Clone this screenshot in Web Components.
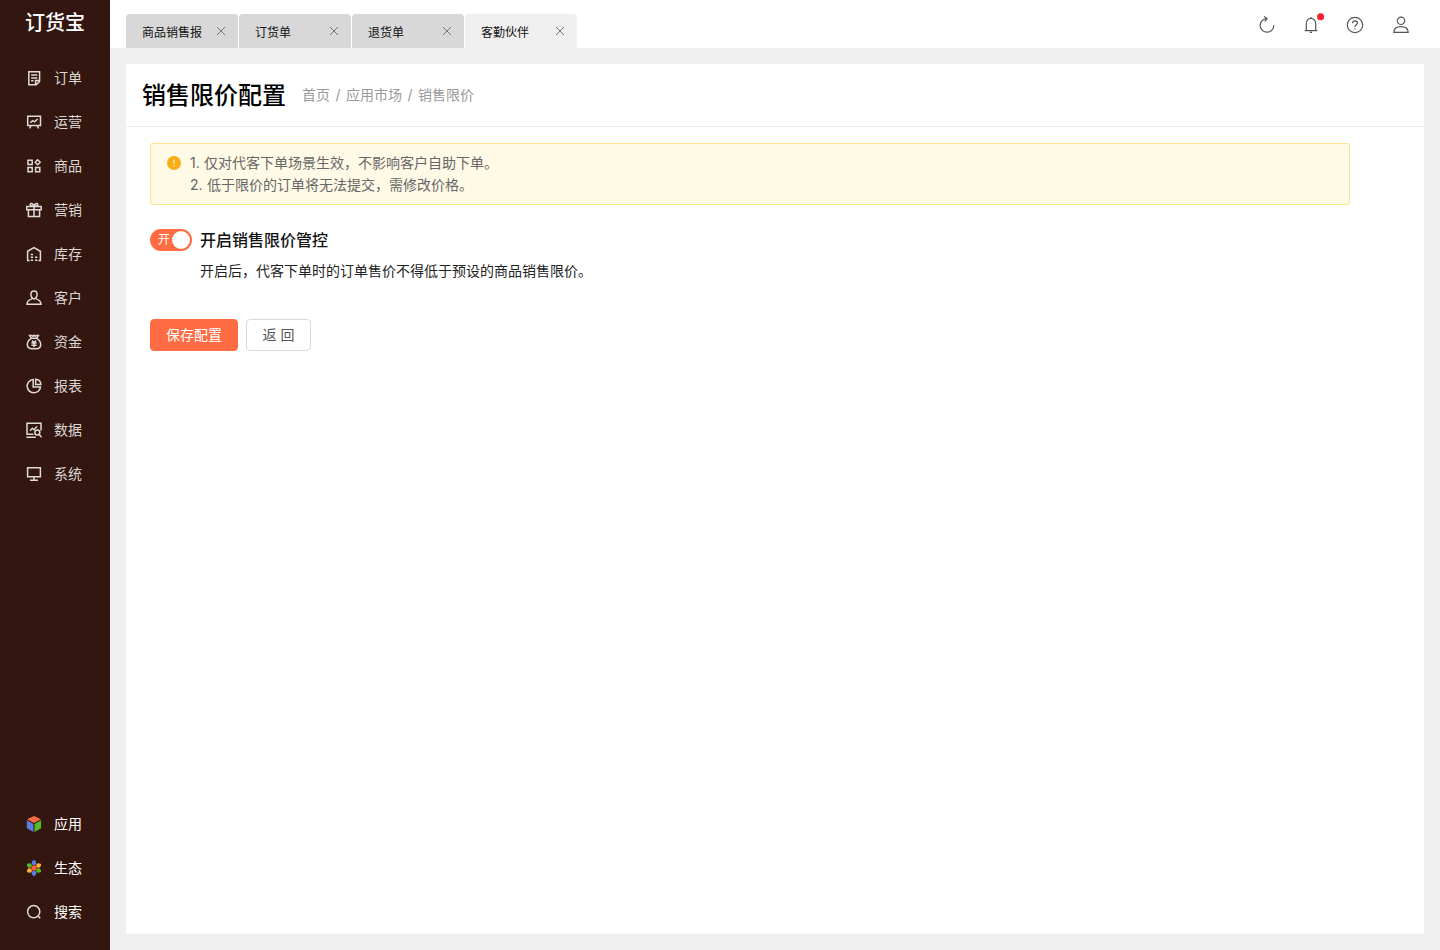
<!DOCTYPE html>
<html lang="zh-CN">
<head>
<meta charset="utf-8">
<title>销售限价配置</title>
<style>
    body {
        margin: 0;
        font-family: Inter, "Noto Sans CJK SC", sans-serif;
        font-size: 14px;
        line-height: 22px;
        color: #222;
    }
</style>
</head>
<body>
<app-shell>
    <side-nav slot="nav">
        <nav-item icon="order">订单</nav-item>
        <nav-item icon="board">运营</nav-item>
        <nav-item icon="goods">商品</nav-item>
        <nav-item icon="gift">营销</nav-item>
        <nav-item icon="store">库存</nav-item>
        <nav-item icon="user">客户</nav-item>
        <nav-item icon="money">资金</nav-item>
        <nav-item icon="pie">报表</nav-item>
        <nav-item icon="data">数据</nav-item>
        <nav-item icon="screen">系统</nav-item>
        <nav-item slot="bottom" icon="cube">应用</nav-item>
        <nav-item slot="bottom" icon="flower">生态</nav-item>
        <nav-item slot="bottom" icon="search">搜索</nav-item>
    </side-nav>
    <top-bar slot="top">
        <page-tab>商品销售报</page-tab>
        <page-tab>订货单</page-tab>
        <page-tab>退货单</page-tab>
        <page-tab active>客勤伙伴</page-tab>
    </top-bar>
    <page-card>
        <span slot="title">销售限价配置</span>
        <bread-crumb slot="crumb"><span>首页</span><i>/</i><span>应用市场</span><i>/</i><span>销售限价</span></bread-crumb>
        <alert-box>
            <alert-line><span slot="no">1.</span>仅对代客下单场景生效，不影响客户自助下单。</alert-line>
            <alert-line wide><span slot="no">2.</span>低于限价的订单将无法提交，需修改价格。</alert-line>
        </alert-box>
        <switch-field>
            <span slot="label">开启销售限价管控</span>
            开启后，代客下单时的订单售价不得低于预设的商品销售限价。
        </switch-field>
        <button-row>
            <ui-button primary>保存配置</ui-button>
            <ui-button>返 回</ui-button>
        </button-row>
    </page-card>
</app-shell>

<script>
// 16x16 line icons, the stroke colour comes from the parent
const icons = {
    order: '<path d="M9.500 14.800H2.800V1.700h10.800v8.800M13.600 10.500v.9l-3.400 3.400h-.6v-4.300z"/><path d="M5.100 5.100h6.200M5.100 7.900h6.200M5.100 10.700h2.500"/>',
    board: '<path d="M1.700 2.200h12.800v9.300H1.700zM4.900 11.800l-1.300 2.700M11.300 11.800l1.300 2.700"/><path d="M4.300 8.700l2.500-2 1.800 1.100 3-2.800"/>',
    goods: '<path d="M2 2.200h4.200v4.200H2zM2 9.500h4.200v4.200H2zM9.600 9.500h4.200v4.200H9.600zM11.700 1.700l2.500 2.500-2.500 2.500-2.500-2.500z"/>',
    gift: '<path d="M.8 4.600h14.400v3.200H.8zM2.400 7.800v6.700h11.200V7.800M8 4.600v9.900M8 4.300C6.800 4.300 4.200 4 4.200 2.500S7 .6 8 4.300C9 .6 11.800 1 11.800 2.500S9.200 4.300 8 4.300"/>',
    store: '<path d="M3.600 14.500H1.600V5.300L8 1.500l6.400 3.800v9.200h-2"/><path d="M4.700 8.500h2.400M4.700 11.300h2.400M9 11.300h2.400M4.700 14.200h2.400M9 14.200h2.400"/>',
    user: '<path d="M8 1.100c2 0 3.100 1.500 3.100 3.500S9.600 8.900 8 8.900 4.900 6.600 4.900 4.600 6 1.100 8 1.100zM5.900 8.900c-2.800.8-4.700 2.400-4.900 5.300h14c-.2-2.900-2.100-4.500-4.900-5.300"/>',
    money: '<path d="M5.200 4.200L3.600 1.400h2.200l1 .9L8 1.300l1.200 1 1-.9h2.200l-1.600 2.800M5.200 4.300h5.600c2.600 1.700 3.900 4 3.900 6.200 0 2.700-1.900 4.300-4.700 4.300H6c-2.800 0-4.700-1.600-4.700-4.300 0-2.200 1.300-4.500 3.900-6.200z"/><path d="M6 6.500l2 2.300 2-2.300M5.400 9h5.200M5.400 11.200h5.200M8 8.800v4.500"/>',
    pie: '<path d="M7.200 1.500a6.700 6.700 0 1 0 7.300 7.400H7.200z"/><path d="M9.700 1.200v5.200h5.200c-.2-2.900-2.300-5-5.200-5.200z"/>',
    data: '<path d="M1 12.500V1.200h14v7.300M.4 12.300h7M.4 15.300h9.400"/><path d="M4 8.700l2.400-2.500 1.500 1.500L11 4.400"/><circle cx="11.300" cy="10.600" r="2.500"/><path d="M13.100 12.500l2.500 2.700"/>',
    screen: '<path d="M1.600 1.700h12.800v9.100H1.600zM8 10.800v3.300M4 14.300h8"/>',
    search: '<circle cx="7.700" cy="7.700" r="6.100"/><path d="M12 12l2.200 2.300"/>',
    cube: '<g stroke="none"><path fill="#ff6b42" d="M8 0l6.900 3.300L8 7 1.100 3.300z"/><path fill="#5b7cdf" d="M.9 4.300l6.600 3.600V16L.9 12.300z"/><path fill="#51bd20" d="M15.100 4.300L8.500 7.900V16l6.600-3.700z"/></g>',
    flower: '<g stroke="none"><g fill="#5b7cdf"><path id="p" d="M8 -.2c1.700 1.100 2.400 2.100 2.300 3.500C10.100 4.500 9.200 5.100 8 5.200 6.800 5.100 5.900 4.500 5.700 3.300 5.600 1.900 6.300.9 8-.2z"/><use href="#p" transform="rotate(180 8 8)"/></g><g fill="#f9b13c"><use href="#p" transform="rotate(60 8 8)"/><use href="#p" transform="rotate(240 8 8)"/></g><g fill="#51bd20"><use href="#p" transform="rotate(120 8 8)"/><use href="#p" transform="rotate(300 8 8)"/></g><circle fill="#ff5b3d" cx="8" cy="8" r="2.700"/></g>'
};

function render(el, html) {
    const template = document.createElement('template');
    template.innerHTML = html;
    el.attachShadow({ mode: 'open' }).appendChild(template.content.cloneNode(true));
}

class AppShell extends HTMLElement {
    constructor() {
        super();
        render(this, `
            <style>
                :host { display: grid; grid-template-columns: 110px 1fr; height: 100vh; min-height: 600px; background: #efefef; }
                .right { display: flex; flex-direction: column; min-width: 0; }
                main { flex: 1; display: flex; padding: 16px; }
            </style>
            <slot name="nav"></slot>
            <div class="right"><slot name="top"></slot><main><slot></slot></main></div>
        `);
    }
}

class SideNav extends HTMLElement {
    constructor() {
        super();
        render(this, `
            <style>
                :host { display: flex; flex-direction: column; background: #32160f; color: #fff; }
                .logo { height: 56px; box-sizing: border-box; padding: 7px 0 0 25px; font-family: "Noto Sans CJK SC", sans-serif; font-size: 20px; line-height: 30px; font-weight: 500; white-space: nowrap; }
                .bottom { margin-top: auto; padding-bottom: 16px; }
                .list { color: #dcd7d5; }
            </style>
            <div class="logo">订货宝</div>
            <div class="list"><slot></slot></div>
            <div class="bottom"><slot name="bottom"></slot></div>
        `);
    }
}

class NavItem extends HTMLElement {
    constructor() {
        super();
        render(this, `
            <style>
                :host { display: flex; align-items: center; height: 44px; padding-left: 26px; gap: 12px; }
                svg { width: 16px; height: 16px; fill: none; stroke: #dfdad8; stroke-width: 1.5; overflow: visible; }
            </style>
            <svg viewBox="0 0 16 16">${icons[this.getAttribute('icon')]}</svg>
            <span><slot></slot></span>
        `);
    }
}

class TopBar extends HTMLElement {
    constructor() {
        super();
        render(this, `
            <style>
                :host { display: flex; justify-content: space-between; height: 48px; background: #fff; }
                .tabs { display: flex; align-items: flex-end; gap: 1px; padding-left: 16px; }
                .tools { display: flex; align-items: center; gap: 26px; padding: 2px 30px 0 0; }
                .tools svg { width: 18px; height: 18px; fill: none; stroke: #555; stroke-width: 1.2; overflow: visible; }
                .tools svg.help { margin-right: 2px; }
            </style>
            <div class="tabs"><slot></slot></div>
            <div class="tools">
                <svg viewBox="0 0 18 18"><path d="M8.500 2.600a6.800 6.800 0 1 0 7.300 6.700M6.200.5l2.900 2.100-2.300 2.700" /></svg>
                <svg viewBox="0 0 18 18"><path d="M4.300 14.500V7.800c0-3.100 2-5.400 4.700-5.400s4.700 2.300 4.700 5.400v6.700M2.700 14.600h12.600M9 1v1.400M7.900 16.400h2.200"/><circle cx="18.600" cy="0.700" r="3.500" fill="#f5222d" stroke="none"/></svg>
                <svg class="help" viewBox="0 0 18 18"><circle cx="9" cy="9" r="7.700"/><path d="M6.600 7.200c0-1.500 1-2.400 2.400-2.400s2.400.9 2.400 2.200c0 1.700-2.400 1.900-2.400 3.900M9 12.200v1.300"/></svg>
                <svg viewBox="0 0 18 18"><circle cx="9" cy="4.800" r="3.700"/><path d="M1.800 16.400c.1-3.700 2.700-5.800 7.200-5.800s7.100 2.100 7.200 5.800z"/></svg>
            </div>
        `);
    }
}

class PageTab extends HTMLElement {
    constructor() {
        super();
        render(this, `
            <style>
                :host { display: flex; align-items: center; justify-content: space-between; box-sizing: border-box; width: 112px; height: 34px; padding: 0 12px 0 16px; border-radius: 4px 4px 0 0; background: #d8d8d8; color: #111; font-family: "Noto Sans CJK SC", sans-serif; font-size: 12px; }
                :host([active]) { background: #efefef; }
                span { padding-top: 1px; }
                svg { width: 10px; height: 10px; stroke: #777; stroke-width: 1; }
            </style>
            <span><slot></slot></span>
            <svg viewBox="0 0 10 10"><path d="M1 1l8 8M9 1L1 9"/></svg>
        `);
    }
}

class PageCard extends HTMLElement {
    constructor() {
        super();
        render(this, `
            <style>
                :host { flex: 1; display: flex; flex-direction: column; background: #fff; }
                header { display: flex; align-items: center; gap: 16px; height: 62px; padding-left: 16px; border-bottom: 1px solid #eee; }
                h1 { margin: 0; padding-top: 2px; font-size: 24px; line-height: 32px; font-weight: 500; color: #000; }
                section { padding: 16px 74px 0 24px; }
            </style>
            <header><h1><slot name="title"></slot></h1><slot name="crumb"></slot></header>
            <section><slot></slot></section>
        `);
    }
}

class BreadCrumb extends HTMLElement {
    constructor() {
        super();
        render(this, `
            <style>
                :host { display: flex; color: #999; }
                ::slotted(i) { width: 16px; text-align: center; font-style: normal; }
            </style>
            <slot></slot>
        `);
    }
}

class AlertBox extends HTMLElement {
    constructor() {
        super();
        render(this, `
            <style>
                :host { display: flex; gap: 9px; padding: 8px 16px; border: 1px solid #ffe58f; border-radius: 2px; background: #fffae6; color: #666; }
                svg { width: 14px; height: 14px; margin-top: 4px; }
            </style>
            <svg viewBox="0 0 14 14"><circle cx="7" cy="7" r="7" fill="#faad14"/><path d="M7 3.500v4.200M7 9.200v1.300" stroke="#fffae6" stroke-width="1.200"/></svg>
            <div><slot></slot></div>
        `);
    }
}

class AlertLine extends HTMLElement {
    constructor() {
        super();
        render(this, `
            <style>
                :host { display: flex; }
                .no { width: 14px; }
                :host([wide]) .no { width: 17px; }
            </style>
            <span class="no"><slot name="no"></slot></span><span><slot></slot></span>
        `);
    }
}

class SwitchField extends HTMLElement {
    constructor() {
        super();
        render(this, `
            <style>
                :host { display: flex; gap: 8px; margin-top: 24px; }
                .switch { display: flex; align-items: center; justify-content: space-between; box-sizing: border-box; width: 42px; height: 22px; padding: 0 2px 0 8px; border-radius: 11px; background: #ff6b42; color: #fff; font-size: 12px; }
                .switch i { width: 18px; height: 18px; border-radius: 50%; background: #fff; }
                .label { font-size: 16px; font-weight: 500; color: #111; }
                .desc { margin-top: 9px; }
            </style>
            <div class="switch">开<i></i></div>
            <div>
                <div class="label"><slot name="label"></slot></div>
                <div class="desc"><slot></slot></div>
            </div>
        `);
    }
}

class ButtonRow extends HTMLElement {
    constructor() {
        super();
        render(this, `
            <style>
                :host { display: flex; gap: 8px; margin-top: 37px; }
            </style>
            <slot></slot>
        `);
    }
}

class UiButton extends HTMLElement {
    constructor() {
        super();
        render(this, `
            <style>
                :host { display: flex; align-items: center; justify-content: center; box-sizing: border-box; width: 65px; height: 32px; border: 1px solid #d9d9d9; border-radius: 4px; background: #fff; color: #555; }
                :host([primary]) { width: 88px; border-color: #ff6b42; background: #ff6b42; color: #fff; }
            </style>
            <span><slot></slot></span>
        `);
    }
}

customElements.define('app-shell', AppShell);
customElements.define('side-nav', SideNav);
customElements.define('nav-item', NavItem);
customElements.define('top-bar', TopBar);
customElements.define('page-tab', PageTab);
customElements.define('page-card', PageCard);
customElements.define('bread-crumb', BreadCrumb);
customElements.define('alert-box', AlertBox);
customElements.define('alert-line', AlertLine);
customElements.define('switch-field', SwitchField);
customElements.define('button-row', ButtonRow);
customElements.define('ui-button', UiButton);
</script>
</body>
</html>
